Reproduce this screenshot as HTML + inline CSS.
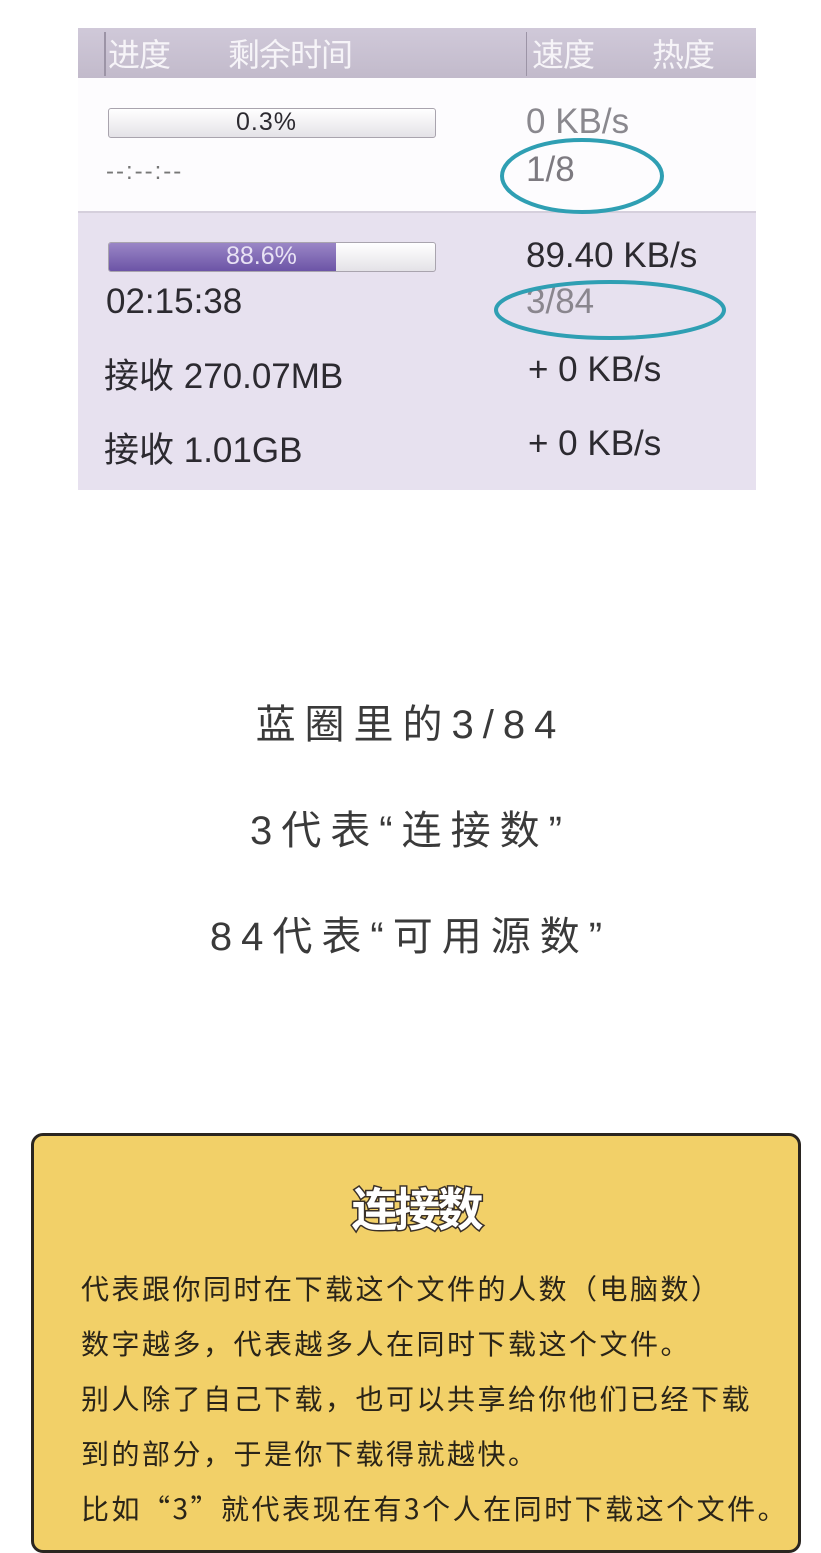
<!DOCTYPE html>
<html><head><meta charset="utf-8"><style>
*{margin:0;padding:0;box-sizing:border-box}
body{width:821px;height:1536px;background:#fff;position:relative;overflow:hidden;font-family:"Liberation Sans","Noto Sans CJK SC",sans-serif}
.a{position:absolute;white-space:nowrap}
.img{position:absolute;left:78px;top:28px;width:678px;height:462px;background:#e7e1ef;overflow:hidden}
.hd{position:absolute;left:0;top:0;width:678px;height:50px;background:linear-gradient(#d0c9d9,#c2bacb);}
.hd span{position:absolute;top:2px;font-size:32px;color:#f6f4f8;font-family:"Noto Sans CJK SC",sans-serif;letter-spacing:-1px}
.w{position:absolute;left:0;top:50px;width:678px;height:135px;background:#fdfcfe;border-bottom:2px solid #d5cfdc}
.t{position:absolute;font-size:35px;color:#2c2a30;white-space:nowrap;font-family:"Liberation Sans","Noto Sans CJK SC",sans-serif;letter-spacing:0}
.c{position:absolute;text-align:center;width:821px;left:0;font-size:40px;color:#3a3a3a;letter-spacing:9px;font-family:"Liberation Sans","Noto Sans CJK SC",sans-serif}
.card{position:absolute;left:31px;top:1133px;width:770px;height:420px;background:#f2d068;border:3px solid #2a2520;border-radius:12px}
.p{position:absolute;left:47px;font-size:28px;letter-spacing:2.5px;color:#2a2418;font-family:"Noto Sans CJK SC",sans-serif;white-space:nowrap}
</style></head><body>
<div class="img">
<div class="hd">
<div style="position:absolute;left:26px;top:4px;width:2px;height:44px;background:#9c94a6"></div>
<div style="position:absolute;left:448px;top:4px;width:1px;height:44px;background:#9c94a6"></div>
<span style="left:30px">进度</span><span style="left:150px">剩余时间</span><span style="left:454px">速度</span><span style="left:574px">热度</span>
</div>
<div class="w"></div>
<div style="position:absolute;left:30px;top:80px;width:328px;height:30px;border:1px solid #a9a4ae;border-radius:3px;background:linear-gradient(#fff,#e4e2e7)"></div>
<div class="t" style="left:158px;top:80px;font-size:25px;letter-spacing:1px">0.3%</div>
<div class="t" style="left:28px;top:130px;font-size:24px;color:#777;letter-spacing:2px">--:--:--</div>
<div class="t" style="left:448px;top:74px;color:#8a888e">0 KB/s</div>
<div class="t" style="left:448px;top:122px;color:#7d7a80">1/8</div>
<svg style="position:absolute;left:418px;top:108px" width="180" height="82"><ellipse cx="86" cy="40" rx="80" ry="36" fill="none" stroke="#2f9fb3" stroke-width="4"/></svg>
<div style="position:absolute;left:30px;top:214px;width:328px;height:30px;border:1px solid #a9a4ae;border-radius:3px;background:linear-gradient(#fff,#e4e2e7)"></div>
<div style="position:absolute;left:31px;top:215px;width:227px;height:28px;background:linear-gradient(#9a86c6,#6c54a6);border-radius:2px 0 0 2px"></div>
<div class="t" style="left:148px;top:214px;font-size:25px;color:#e8e2f4">88.6%</div>
<div class="t" style="left:448px;top:208px">89.40 KB/s</div>
<div class="t" style="left:28px;top:254px">02:15:38</div>
<div class="t" style="left:448px;top:254px;color:#8a868e">3/84</div>
<svg style="position:absolute;left:412px;top:248px" width="250" height="72"><ellipse cx="120" cy="34" rx="114" ry="28" fill="none" stroke="#2f9fb3" stroke-width="4"/></svg>
<div class="t" style="left:26px;top:320px">接收 270.07MB</div>
<div class="t" style="left:450px;top:322px">+ 0 KB/s</div>
<div class="t" style="left:26px;top:394px">接收 1.01GB</div>
<div class="t" style="left:450px;top:396px">+ 0 KB/s</div>
</div>
<div class="c" style="top:692px">蓝圈里的3/84</div>
<div class="c" style="top:798px">3代表“连接数”</div>
<div class="c" style="top:904px">84代表“可用源数”</div>
<div class="card">
<div class="a" style="left:0;width:764px;text-align:center;top:38px;font-size:46px;font-weight:bold;color:#fff;font-family:'Noto Sans CJK SC',sans-serif;-webkit-text-stroke:3px #3a3028;paint-order:stroke fill;letter-spacing:-3px">连接数</div>
<div class="p" style="top:132px">代表跟你同时在下载这个文件的人数（电脑数）</div>
<div class="p" style="top:187px">数字越多，代表越多人在同时下载这个文件。</div>
<div class="p" style="top:242px">别人除了自己下载，也可以共享给你他们已经下载</div>
<div class="p" style="top:297px">到的部分，于是你下载得就越快。</div>
<div class="p" style="top:352px">比如“3”就代表现在有3个人在同时下载这个文件。</div>
</div>
</body></html>
